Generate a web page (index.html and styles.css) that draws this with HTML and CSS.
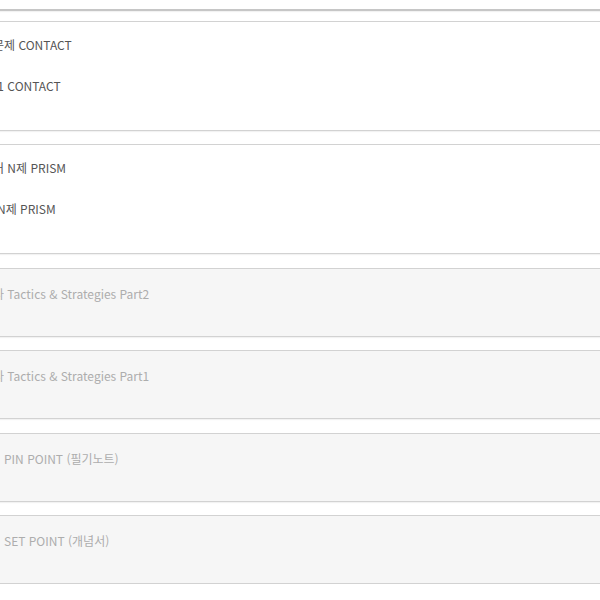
FILE: index.html
```html
<!DOCTYPE html>
<html lang="ko">
<head>
<meta charset="utf-8">
<title>교재 목록</title>
<link rel="stylesheet" href="styles.css">
</head>
<body>
<main class="course-list">
  <section class="course course--prev">
    <div class="course__row"><span class="course__lead">2024 수능 대비</span><span class="course__name"> 실전 모의고사</span></div>
    <div class="course__row"><span class="course__lead">2024 수능 대비</span><span class="course__name"> 파이널</span></div>
  </section>

  <section class="course">
    <div class="course__row"><span class="course__lead">수학 문</span><span class="course__name">제 CONTACT</span></div>
    <div class="course__row"><span class="course__lead">실전 모의고사 VOL.1</span><span class="course__name"> CONTACT</span></div>
  </section>

  <section class="course">
    <div class="course__row"><span class="course__lead">국어</span><span class="course__name"> N제 PRISM</span></div>
    <div class="course__row"><span class="course__lead"></span><span class="course__name course__name--tight">N제 PRISM</span></div>
  </section>

  <section class="course course--closed">
    <div class="course__row"><span class="course__lead">모의고사</span><span class="course__name"> Tactics &amp; Strategies Part2</span></div>
  </section>

  <section class="course course--closed">
    <div class="course__row"><span class="course__lead">모의고사</span><span class="course__name"> Tactics &amp; Strategies Part1</span></div>
  </section>

  <section class="course course--closed">
    <div class="course__row"><span class="course__lead"></span><span class="course__name">PIN POINT (필기노트)</span></div>
  </section>

  <section class="course course--closed">
    <div class="course__row"><span class="course__lead"></span><span class="course__name">SET POINT (개념서)</span></div>
  </section>
</main>
</body>
</html>
```

FILE: styles.css
```css
html, body {
  margin: 0;
  padding: 0;
  background: #fff;
  overflow: hidden;
}

body {
  font-family: "Noto Sans CJK KR", "Noto Sans", sans-serif;
  font-size: 12px;
  color: #555;
}

.course-list {
  display: flex;
  flex-direction: column;
  gap: 13.5px;
  margin: -100px -200px 0 -197px;
}

.course {
  display: flex;
  flex-direction: column;
  gap: 19px;
  padding: 12px 0 33px;
  background: #fff;
  border: 1px solid #d2d2d2;
  box-shadow: 0 1px 1px rgba(0, 0, 0, 0.05);
}

.course--prev {
  border-bottom: 2px solid #c6c6c6;
  margin-bottom: -4px;
}

.course--closed {
  padding: 14px 0 31px;
  background: #f6f6f6;
  color: #adadad;
}

.course__row {
  display: flex;
  align-items: center;
  height: 22px;
  line-height: 22px;
  white-space: nowrap;
}

.course__lead {
  flex: none;
  width: 200px;
  text-align: right;
  overflow: hidden;
}

.course__name {
  flex: none;
  white-space: pre;
}

/* first letter of this title sits half past the left edge */
.course__name--tight {
  margin-left: -7px;
}
```
